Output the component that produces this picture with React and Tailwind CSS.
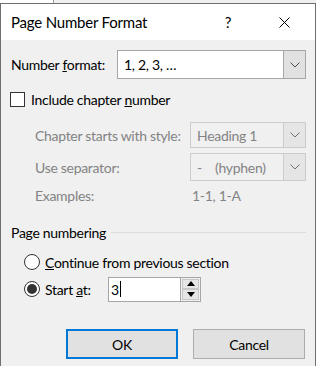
const font = { fontFamily: 'Lato, "Noto Sans", sans-serif' };

function Chevron({ color = '#404040' }) {
  return (
    <svg width="10" height="6" viewBox="0 0 10 6" fill="none" stroke={color} strokeWidth="1">
      <path d="M0.5 0.5L5 5L9.5 0.5" />
    </svg>
  );
}

function Select({ value, disabled, className }) {
  return (
    <div
      className={`flex items-stretch border ${
        disabled ? 'border-[#cccccc] bg-[#f0f0f0] text-[#838383]' : 'border-[#a6a6a6] bg-white text-black'
      } ${className}`}
    >
      <div className="flex flex-1 items-center pl-[6px] whitespace-pre">{value}</div>
      <div
        className={`flex w-[22px] items-center justify-center border-l ${
          disabled ? 'border-[#cccccc] bg-[#e5e5e5]' : 'border-[#a6a6a6] bg-[#e1e1e1]'
        }`}
      >
        <Chevron color={disabled ? '#707070' : '#505050'} />
      </div>
    </div>
  );
}

function Radio({ checked }) {
  return (
    <span className="flex h-[16px] w-[16px] items-center justify-center rounded-full border border-[#333333] bg-white">
      {checked && <span className="h-[10px] w-[10px] rounded-full bg-[#333333]" />}
    </span>
  );
}

export default function App() {
  return (
    <div style={font} className="h-[366px] w-[316px] overflow-hidden whitespace-nowrap bg-white text-[14px] tracking-[-0.3px] text-black">
      {/* background strip */}
      <div className="flex h-[3px]">
        <div className="w-[53px] bg-white" />
        <div className="w-px bg-[#a0a0a0]" />
        <div className="flex-1 bg-[#f0f0f0]" />
      </div>

      <div className="flex h-[363px] flex-col border-x border-t border-[#6f6f6f] bg-[#f0f0f0]">
        {/* title bar */}
        <div className="flex h-[36px] items-center bg-white text-[15px] tracking-[-0.2px]">
          <span className="ml-[10px] flex-1">Page Number Format</span>
          <span className="w-[20px] text-center">?</span>
          <span className="ml-[36px] mr-[21px] flex w-[20px] justify-center">
            <svg width="11" height="11" viewBox="0 0 11 11" stroke="#000" strokeWidth="1">
              <path d="M0.5 0.5L10.5 10.5M10.5 0.5L0.5 10.5" />
            </svg>
          </span>
        </div>

        {/* number format */}
        <div className="mt-[10px] flex h-[29px] items-center">
          <span className="ml-[10px] w-[106px]">
            Number <span className="underline">f</span>ormat:
          </span>
          <Select value="1, 2, 3, …" className="h-[29px] w-[189px]" />
        </div>

        {/* include chapter */}
        <div className="mt-[12px] flex h-[16px] items-center">
          <span className="ml-[9px] h-[15px] w-[15px] border border-[#333333] bg-white" />
          <span className="ml-[6px]">
            Include chapter <span className="underline">n</span>umber
          </span>
        </div>

        <div className="mt-[15px] flex h-[26px] items-center text-[#838383]">
          <span className="ml-[34px] w-[155px]">Chapter starts with style:</span>
          <Select value="Heading 1" disabled className="h-[26px] w-[116px]" />
        </div>

        <div className="mt-[5px] flex h-[28px] items-center text-[#838383]">
          <span className="ml-[34px] w-[155px]">Use separator:</span>
          <Select value="-    (hyphen)" disabled className="h-[28px] w-[116px]" />
        </div>

        <div className="mt-[4px] flex h-[20px] items-center text-[#838383]">
          <span className="ml-[34px] w-[157px]">Examples:</span>
          <span>1-1, 1-A</span>
        </div>

        {/* page numbering */}
        <div className="mt-[17px] flex h-[20px] items-center">
          <span className="ml-[10px]">Page numbering</span>
          <span className="ml-[5px] mr-[9px] h-px flex-1 bg-[#dcdcdc]" />
        </div>

        <div className="mt-[10px] flex h-[20px] items-center">
          <span className="ml-[23px]"><Radio /></span>
          <span className="ml-[5px]">
            <span className="underline">C</span>ontinue from previous section
          </span>
        </div>

        <div className="mt-[5px] flex h-[24px] items-center">
          <span className="ml-[23px]"><Radio checked /></span>
          <span className="ml-[5px] w-[63px]">
            Start <span className="underline">a</span>t:
          </span>
          <div className="flex h-[25px] w-[93px] items-stretch border border-[#a6a6a6] bg-white">
            <div className="flex flex-1 items-center pl-[2px]">
              3<span className="ml-px h-[16px] w-px bg-black" />
            </div>
            <div className="flex w-[20px] flex-col border-l border-[#a6a6a6] bg-[#f0f0f0] p-px">
              <div className="flex flex-1 items-center justify-center border border-[#c8c8c8] bg-[#e5e5e5]">
                <svg width="8" height="5" viewBox="0 0 8 5"><path d="M0 5L4 0L8 5Z" fill="#000" /></svg>
              </div>
              <div className="flex flex-1 items-center justify-center border border-[#c8c8c8] bg-[#e5e5e5]">
                <svg width="8" height="5" viewBox="0 0 8 5"><path d="M0 0L4 5L8 0Z" fill="#000" /></svg>
              </div>
            </div>
          </div>
        </div>

        {/* buttons */}
        <div className="mt-[28px] flex h-[30px] gap-[15px] pl-[65px]">
          <button className="flex w-[112px] items-center justify-center border-2 border-[#0078d7] bg-[#e1e1e1]">
            OK
          </button>
          <button className="flex w-[112px] items-center justify-center border border-[#adadad] bg-[#e1e1e1]">
            Cancel
          </button>
        </div>
      </div>
    </div>
  );
}
